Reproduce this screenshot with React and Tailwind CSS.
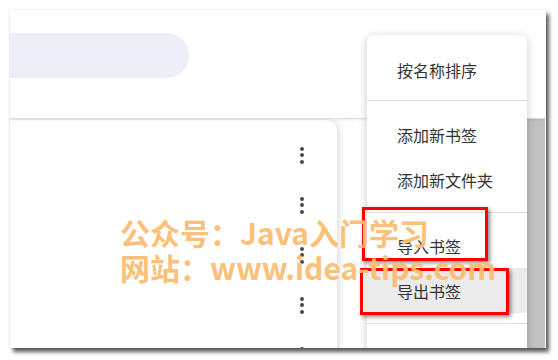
import React from 'react';

const Kebab = () => (
  <div className="flex flex-col items-center gap-[2.5px]">
    <span className="block h-[4px] w-[4px] rounded-full bg-[#4a4a4a]" />
    <span className="block h-[4px] w-[4px] rounded-full bg-[#4a4a4a]" />
    <span className="block h-[4px] w-[4px] rounded-full bg-[#4a4a4a]" />
  </div>
);

const MenuItem = ({ label, active }) => (
  <div
    className={`flex h-[45px] items-center px-[30px] text-[16px] text-[#333] ${
      active ? 'bg-[#ebebeb]' : ''
    }`}
  >
    {label}
  </div>
);

export default function App() {
  return (
    <div
      className="relative h-[360px] w-[558px] overflow-hidden bg-white pl-[10px] pt-[10px]"
      style={{ fontFamily: '"Noto Sans CJK SC", "Noto Sans", sans-serif' }}
    >
      {/* screenshot window */}
      <div className="relative h-[338px] w-[536px] overflow-hidden bg-white shadow-[3px_4px_4px_rgba(0,0,0,0.65),0_0_2px_rgba(0,0,0,0.15)]">
        {/* header */}
        <div className="relative z-10 h-[109px] border-b border-[#dedede] bg-white pt-[23px] shadow-[0_1px_3px_rgba(0,0,0,0.08)]">
          <div className="h-[45px] w-[179px] rounded-r-full bg-[#eceef8]" />
        </div>

        {/* list card */}
        <div className="mt-[1px] h-[240px] w-[327px] rounded-tr-[10px] bg-white pt-[10px] shadow-[1px_1px_8px_rgba(0,0,0,0.18)]">
          {[0, 1, 2, 3, 4].map((i) => (
            <div key={i} className="flex h-[50px] items-center justify-end pr-[33px]">
              <Kebab />
            </div>
          ))}
        </div>

        {/* scrollbar */}
        <div className="absolute left-[517px] top-[80px] flex h-[258px] w-[18px] flex-col">
          <div className="flex h-[21px] items-center justify-center bg-[#f1f1f1]">
            <svg width="9" height="6" viewBox="0 0 9 6">
              <path d="M0 6 L4.5 0 L9 6 Z" fill="#a3a3a3" />
            </svg>
          </div>
          <div className="flex-1 bg-[#c1c1c1]" />
        </div>

        {/* dropdown menu */}
        <div className="absolute left-[357px] top-[25px] z-20 h-[330px] w-[160px] rounded-t-[6px] bg-white shadow-[0_2px_10px_rgba(0,0,0,0.22)]">
          <div className="px-[30px] pb-[15px] pt-[20px] text-[16px] leading-[30px] text-[#333]">
            按名称排序
          </div>
          <div className="border-t border-[#e0e0e0] pb-[10px] pt-[11px]">
            <MenuItem label="添加新书签" />
            <MenuItem label="添加新文件夹" />
          </div>
          <div className="border-t border-[#e0e0e0] pb-[10px] pt-[10px]">
            <MenuItem label="导入书签" />
            <MenuItem label="导出书签" active />
          </div>
          <div className="border-t border-[#e0e0e0]" />
        </div>
      </div>

      {/* red highlight boxes */}
      <div className="absolute left-[362px] top-[207px] z-30 h-[54px] w-[126px] border-[3px] border-[#ff0000] shadow-[2px_2px_4px_rgba(0,0,0,0.45)]" />
      <div className="absolute left-[360px] top-[268px] z-30 h-[47px] w-[149px] border-[3px] border-[#ff0000] shadow-[2px_2px_4px_rgba(0,0,0,0.45)]" />

      {/* watermark */}
      <div className="pointer-events-none absolute left-[120px] top-[215px] z-40 whitespace-nowrap text-[30px] font-bold leading-[35px] text-[#fbbd72] opacity-95">
        <div>公众号：Java入门学习</div>
        <div>网站：www.idea-tips.com</div>
      </div>
    </div>
  );
}
